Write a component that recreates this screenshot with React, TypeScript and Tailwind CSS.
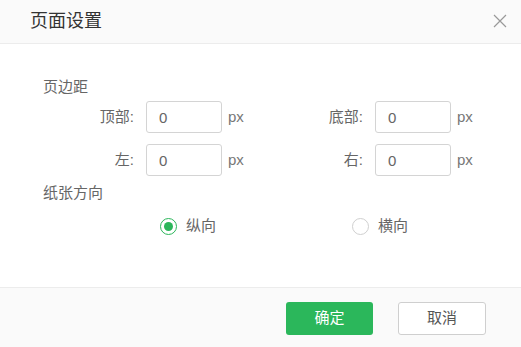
import React, { useState } from 'react';

const font = { fontFamily: '"Liberation Sans", "Noto Sans CJK SC", sans-serif' };

function MarginField({ label, value }: { label: string; value: string }) {
  return (
    <div className="flex items-center">
      <span className="w-[92px] text-right text-[15px] text-[#666] pr-[1px]">{label}</span>
      <input
        defaultValue={value}
        className="ml-[11px] w-[76px] h-[32px] px-[12px] border border-[#d4d4d4] rounded-[3px] text-[15px] text-[#666] outline-none bg-white"
      />
      <span className="ml-[6px] text-[15px] text-[#777]">px</span>
    </div>
  );
}

function Radio({ label, checked, onClick }: { label: string; checked: boolean; onClick: () => void }) {
  return (
    <button onClick={onClick} className="flex items-center gap-[9px] h-[20px]">
      <span
        className={`w-[17px] h-[17px] rounded-full border flex items-center justify-center bg-white ${
          checked ? 'border-[#2bb65a]' : 'border-[#d0d0d0]'
        }`}
      >
        {checked && <span className="w-[9px] h-[9px] rounded-full bg-[#2bb65a]" />}
      </span>
      <span className="text-[15px] text-[#666]">{label}</span>
    </button>
  );
}

export default function App() {
  const [orientation, setOrientation] = useState<'portrait' | 'landscape'>('portrait');

  return (
    <div className="w-[521px] h-[347px] bg-white flex flex-col" style={font}>
      {/* Header */}
      <div className="h-[44px] bg-[#fafafa] border-b border-[#ececec] flex items-center justify-between pl-[30px] pr-[14px]">
        <span className="text-[18px] text-[#333]">页面设置</span>
        <svg width="14" height="14" viewBox="0 0 14 14" className="mb-[1px]">
          <path d="M1 1L13 13M13 1L1 13" stroke="#999" strokeWidth="1.2" />
        </svg>
      </div>

      {/* Body */}
      <div className="flex-1 pl-[43px] pt-[33px]">
        <div className="text-[15px] text-[#666] h-[20px] leading-[20px]">页边距</div>
        <div className="mt-[4px] grid grid-cols-[229px_229px] gap-y-[11px]">
          <MarginField label="顶部:" value="0" />
          <MarginField label="底部:" value="0" />
          <MarginField label="左:" value="0" />
          <MarginField label="右:" value="0" />
        </div>
        <div className="mt-[7px] text-[15px] text-[#666] h-[20px] leading-[20px]">纸张方向</div>
        <div className="mt-[13px] flex pl-[117px] gap-[136px]">
          <Radio label="纵向" checked={orientation === 'portrait'} onClick={() => setOrientation('portrait')} />
          <Radio label="横向" checked={orientation === 'landscape'} onClick={() => setOrientation('landscape')} />
        </div>
      </div>

      {/* Footer */}
      <div className="h-[60px] bg-[#fafafa] border-t border-[#ececec] flex items-start justify-end pt-[14px] pr-[35px] gap-[25px]">
        <button className="w-[87px] h-[33px] rounded-[3px] bg-[#2bb75b] text-white text-[15px]">确定</button>
        <button className="w-[88px] h-[33px] rounded-[3px] bg-white border border-[#cfcfcf] text-[#555] text-[15px]">
          取消
        </button>
      </div>
    </div>
  );
}
